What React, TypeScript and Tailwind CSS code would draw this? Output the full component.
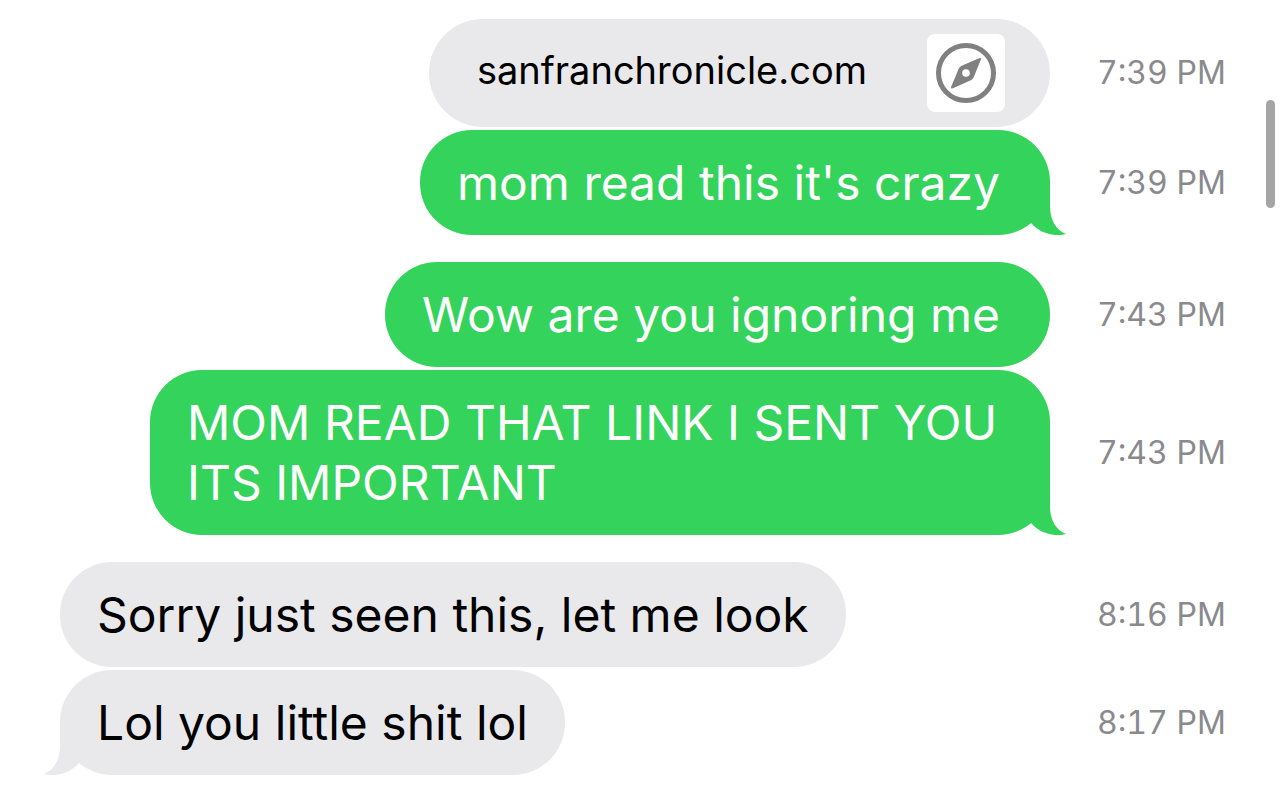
import clsx from 'clsx'

type Message = {
  text: string
  time: string
  sent?: boolean
  tail?: boolean
  link?: boolean
}

const groups: Message[][] = [
  [
    { text: 'sanfranchronicle.com', time: '7:39 PM', sent: true, link: true },
    { text: "mom read this it's crazy", time: '7:39 PM', sent: true, tail: true },
  ],
  [
    { text: 'Wow are you ignoring me', time: '7:43 PM', sent: true },
    { text: 'MOM READ THAT LINK I SENT YOU ITS IMPORTANT', time: '7:43 PM', sent: true, tail: true },
  ],
  [
    { text: 'Sorry just seen this, let me look', time: '8:16 PM' },
    { text: 'Lol you little shit lol', time: '8:17 PM', tail: true },
  ],
]

function Tail({ sent }: { sent?: boolean }) {
  return (
    <svg
      viewBox="0 0 56 55"
      aria-hidden="true"
      className={clsx(
        'absolute bottom-0 h-[55px] w-14',
        sent ? '-right-4 text-[#34d35b]' : '-left-4 -scale-x-100 text-[#e9e9eb]'
      )}
    >
      <path
        fill="currentColor"
        d="M40 0V26C40 40 46 50 56 54C53 55 49 55 45 55C36 54 28 51 21 43L0 20V0Z"
      />
    </svg>
  )
}

function Compass() {
  return (
    <svg viewBox="0 0 78 78" aria-hidden="true" className="size-[78px] shrink-0 rounded-lg bg-white">
      <circle cx="39" cy="39" r="27.5" fill="none" stroke="#808080" strokeWidth="5" />
      <path
        fill="#808080"
        stroke="#808080"
        strokeWidth="2"
        strokeLinejoin="round"
        d="M53 25L46 42.500Q45.500 44 44 45L25 53.500L32.500 35.500Q33 34 34.500 33Z"
      />
      <circle cx="39" cy="39" r="3.800" fill="#fff" />
    </svg>
  )
}

function LinkBubble({ text }: { text: string }) {
  return (
    <a
      href="#"
      className="flex h-[108px] items-center gap-[60px] rounded-[54px] bg-[#e9e9eb] pr-[45px] pl-12 text-[38px] leading-[44px] text-black"
    >
      <span className="pb-1.5">{text}</span>
      <Compass />
    </a>
  )
}

function Bubble({ text, sent, tail }: Message) {
  return (
    <div
      className={clsx(
        'relative max-w-[900px] rounded-[52px] pt-[23px] pb-[22px] text-[48px] leading-[60px]',
        sent ? 'bg-[#34d35b] pr-[50px] pl-[37px] text-white' : 'bg-[#e9e9eb] px-[37px] text-black'
      )}
    >
      {tail && <Tail sent={sent} />}
      <p className="relative">{text}</p>
    </div>
  )
}

export default function App() {
  return (
    <div className="relative min-h-screen bg-white pt-[19px] pb-5 font-['Inter',sans-serif]">
      <main className="flex flex-col gap-[27px] pr-[61px] pl-[60px]">
        {groups.map((messages, i) => (
          <section key={i} className="flex flex-col gap-[3px]">
            {messages.map((message) => (
              <div key={message.text} className="flex items-center gap-[47px]">
                <div className={clsx('flex min-w-0 flex-1', message.sent && 'justify-end')}>
                  {message.link ? <LinkBubble text={message.text} /> : <Bubble {...message} />}
                </div>
                <time className="w-[126px] shrink-0 text-[32px] leading-10 whitespace-nowrap text-[#8a8a8e] tabular-nums">
                  {message.time}
                </time>
              </div>
            ))}
          </section>
        ))}
      </main>

      {/* Scroll indicator */}
      <div className="absolute top-[100px] right-[9px] h-[108px] w-[9px] rounded-full bg-[#a5a5a5]" />
    </div>
  )
}
